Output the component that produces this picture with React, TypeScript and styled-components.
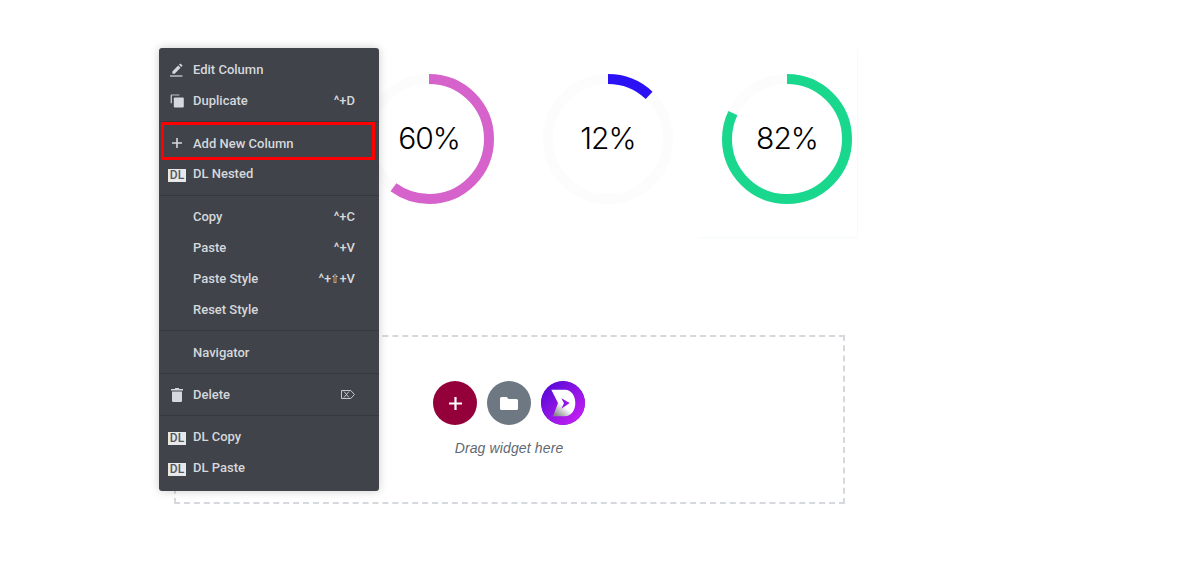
import React from "react";
import styled, { createGlobalStyle } from "styled-components";

const GlobalStyle = createGlobalStyle`
  html, body {
    margin: 0;
    background: #fff;
  }
`;

const Page = styled.div`
  position: relative;
  width: 1190px;
  height: 584px;
  padding-top: 48px;
  box-sizing: border-box;
  overflow: hidden;
`;

const ChartRow = styled.div`
  display: flex;
  gap: 19px;
  padding-left: 339px;
`;

const ChartCell = styled.div<{ $framed?: boolean }>`
  width: 160px;
  box-sizing: border-box;
  padding: 26px 5px 33px 25px;
  ${p => p.$framed && "box-shadow: 1px 1px 0 #f4fbfa;"}
`;

const Donut = styled.div`
  position: relative;
  width: 130px;
  height: 130px;

  svg {
    display: block;
  }
`;

const Percent = styled.span`
  position: absolute;
  inset: 0;
  padding-bottom: 2px;
  display: flex;
  align-items: center;
  justify-content: center;
  font-family: Inter, "Liberation Sans", sans-serif;
  font-weight: 300;
  font-size: 30px;
  letter-spacing: -1px;
  color: #000;
`;

const DropZone = styled.div`
  width: 671px;
  height: 169px;
  margin: 98px 0 0 174px;
  padding: 44px 1px 0 0;
  box-sizing: border-box;
  border: 2px dashed #d5d8dc;
  display: flex;
  flex-direction: column;
  align-items: center;
`;

const Buttons = styled.div`
  display: flex;
  gap: 10px;
`;

const RoundButton = styled.div<{ $bg: string }>`
  width: 44px;
  height: 44px;
  border-radius: 50%;
  background: ${p => p.$bg};
  display: flex;
  align-items: center;
  justify-content: center;
  overflow: hidden;
`;

const DropHint = styled.div`
  margin-top: 15px;
  font-family: "Liberation Sans", Arial, sans-serif;
  font-style: italic;
  font-size: 14px;
  letter-spacing: 0.13px;
  line-height: 16px;
  color: #5f6870;
`;

const Menu = styled.div`
  position: absolute;
  left: 159px;
  top: 48px;
  width: 220px;
  height: 443px;
  padding-top: 0.75px;
  box-sizing: border-box;
  background: #404349;
  border-radius: 3px;
  box-shadow: 0 0 10px rgba(0, 0, 0, 0.2);
  font-family: Roboto, "Liberation Sans", sans-serif;
  font-size: 13px;
  font-weight: 500;
  color: #d5d8dc;
`;

const MenuGroup = styled.div`
  padding: 5.25px 0;
  border-bottom: 1px solid #36393e;

  &:last-child {
    padding-top: 6px;
    border-bottom: 0;
  }
`;

const MenuRow = styled.div`
  position: relative;
  display: flex;
  align-items: center;
  height: 31px;
  padding: 0 24px 0 9px;
`;

const IconSlot = styled.span`
  width: 25px;
  flex: none;
  display: flex;
  align-items: center;
  justify-content: flex-start;

  svg {
    margin-left: 2px;
  }
`;

const Label = styled.span<{ $raised?: boolean }>`
  flex: 1;
  ${p => p.$raised && "margin-top: -2px;"}
`;

const Shortcut = styled.span`
  display: inline-flex;
  align-items: center;
  white-space: nowrap;
`;

const ShiftGlyph = styled.span`
  font-family: "DejaVu Sans", sans-serif;
  font-size: 12px;
  font-weight: 400;
  line-height: 1;
  margin: 0 -1px;
`;

const DlBadge = styled.span`
  width: 18px;
  height: 13px;
  margin-top: 2px;
  background: #e6e8ea;
  color: #54575d;
  font-size: 12px;
  font-weight: 500;
  line-height: 13px;
  text-align: center;
`;

const Highlight = styled.div`
  position: absolute;
  left: 2px;
  top: -6px;
  width: 214px;
  height: 38px;
  box-sizing: border-box;
  border: 3px solid #f00;
  pointer-events: none;
`;

function Ring({ value, color }: { value: number; color: string }) {
  const r = 60;
  const c = 2 * Math.PI * r;
  return (
    <Donut>
      <svg width="130" height="130" viewBox="0 0 130 130">
        <circle cx="65" cy="65" r={r} fill="none" stroke="#fcfcfc" strokeWidth="10" />
        <circle
          cx="65"
          cy="65"
          r={r}
          fill="none"
          stroke={color}
          strokeWidth="10"
          strokeDasharray={`${(c * value) / 100} ${c}`}
          transform="rotate(-90 65 65)"
        />
      </svg>
      <Percent>{value}%</Percent>
    </Donut>
  );
}

const iconColor = "#d5d8dc";

const EditIcon = () => (
  <svg width="14" height="14" viewBox="0 0 14 14" fill={iconColor}>
    <path d="M10.300.4l2.300 2.200-1.300 1.400L9 1.800zM8.200 2.600l2.300 2.200-5.800 6H2.400V8.500z" />
    <rect x="0" y="12.400" width="12.400" height="1.200" />
  </svg>
);

const DuplicateIcon = () => (
  <svg width="14" height="14" viewBox="0 0 14 14" fill={iconColor}>
    <path d="M1.400.4h8v1.200H2v7.600H.6V1.200Q.6.4 1.400.4z" opacity="0.85" />
    <rect x="3.800" y="3.400" width="10" height="10.200" rx="1" />
  </svg>
);

const MenuPlusIcon = () => (
  <svg width="14" height="14" viewBox="0 0 14 14" fill="none" stroke={iconColor} strokeWidth="1.600">
    <path d="M7 2v10M2 7h10" />
  </svg>
);

const TrashIcon = () => (
  <svg width="14" height="14" viewBox="0 0 14 14" fill={iconColor}>
    <path d="M5.200 0h3.600l.5 1H13v1.500H1V1h3.700zM2 3.400h10v9.400q0 1.200-1.200 1.200H3.200Q2 14 2 12.800z" />
  </svg>
);

const ForwardDeleteIcon = () => (
  <svg width="14" height="9" viewBox="0 0 14 9" fill="none" stroke={iconColor} strokeWidth="0.900">
    <path d="M.5.5h9.300l3.600 4-3.600 4H.5zM3 1.500l5 6M8 1.500l-5 6" />
  </svg>
);

const AddIcon = () => (
  <svg width="13" height="13" viewBox="0 0 13 13" fill="none" stroke="#fff" strokeWidth="2.200">
    <path d="M6.500 0v13M0 6.500h13" />
  </svg>
);

const FolderIcon = () => (
  <svg width="18" height="15" viewBox="0 0 18 15" fill="#fff">
    <path d="M1.500 1h5.200l1.800 2h8q1.500 0 1.500 1.500v8q0 1.500-1.500 1.500h-15Q0 14 0 12.500v-10Q0 1 1.500 1z" />
  </svg>
);

const LogoMark = () => (
  <svg width="44" height="44" viewBox="0 0 44 44">
    <defs>
      <linearGradient id="logoBg" x1="0.1" y1="0.05" x2="0.9" y2="0.95">
        <stop offset="0" stopColor="#5309d6" />
        <stop offset="1" stopColor="#cb20f3" />
      </linearGradient>
      <linearGradient id="logoFold" x1="0.15" y1="0.95" x2="0.45" y2="0.55">
        <stop offset="0" stopColor="#85848c" />
        <stop offset="1" stopColor="#fff" />
      </linearGradient>
    </defs>
    <circle cx="22" cy="22" r="22" fill="url(#logoBg)" />
    <path
      fillRule="evenodd"
      fill="url(#logoFold)"
      d="M10.300 8.700H24C30 8.700 34.300 14.500 34.300 22S30 35.300 24 35.300H12L17 22zM20.300 17.200l2.700 5-2.700 5.500 8.400-5.700z"
    />
  </svg>
);

export default function App() {
  return (
    <Page>
      <GlobalStyle />
      <ChartRow>
        <ChartCell><Ring value={60} color="#d563cb" /></ChartCell>
        <ChartCell><Ring value={12} color="#2a12f5" /></ChartCell>
        <ChartCell $framed><Ring value={82} color="#19d88e" /></ChartCell>
      </ChartRow>

      <DropZone>
        <Buttons>
          <RoundButton $bg="#93003a"><AddIcon /></RoundButton>
          <RoundButton $bg="#6d7882"><FolderIcon /></RoundButton>
          <RoundButton $bg="#6a12dd"><LogoMark /></RoundButton>
        </Buttons>
        <DropHint>Drag widget here</DropHint>
      </DropZone>

      <Menu>
        <MenuGroup>
          <MenuRow><IconSlot><EditIcon /></IconSlot><Label>Edit Column</Label></MenuRow>
          <MenuRow><IconSlot><DuplicateIcon /></IconSlot><Label>Duplicate</Label><Shortcut>^+D</Shortcut></MenuRow>
        </MenuGroup>
        <MenuGroup>
          <MenuRow>
            <IconSlot><MenuPlusIcon /></IconSlot><Label>Add New Column</Label>
            <Highlight />
          </MenuRow>
          <MenuRow><IconSlot><DlBadge>DL</DlBadge></IconSlot><Label $raised>DL Nested</Label></MenuRow>
        </MenuGroup>
        <MenuGroup>
          <MenuRow><IconSlot /><Label>Copy</Label><Shortcut>^+C</Shortcut></MenuRow>
          <MenuRow><IconSlot /><Label>Paste</Label><Shortcut>^+V</Shortcut></MenuRow>
          <MenuRow><IconSlot /><Label>Paste Style</Label><Shortcut>^+<ShiftGlyph>⇧</ShiftGlyph>+V</Shortcut></MenuRow>
          <MenuRow><IconSlot /><Label>Reset Style</Label></MenuRow>
        </MenuGroup>
        <MenuGroup>
          <MenuRow><IconSlot /><Label>Navigator</Label></MenuRow>
        </MenuGroup>
        <MenuGroup>
          <MenuRow><IconSlot><TrashIcon /></IconSlot><Label>Delete</Label><Shortcut><ForwardDeleteIcon /></Shortcut></MenuRow>
        </MenuGroup>
        <MenuGroup>
          <MenuRow><IconSlot><DlBadge>DL</DlBadge></IconSlot><Label $raised>DL Copy</Label></MenuRow>
          <MenuRow><IconSlot><DlBadge>DL</DlBadge></IconSlot><Label $raised>DL Paste</Label></MenuRow>
        </MenuGroup>
      </Menu>
    </Page>
  );
}
